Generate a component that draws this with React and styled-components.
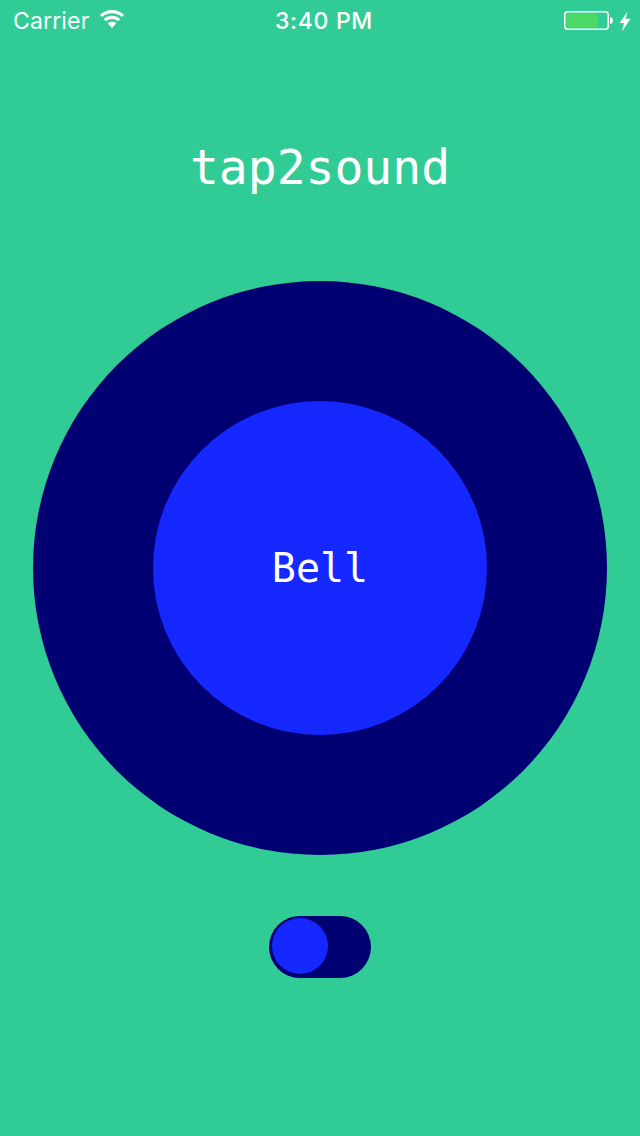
import React, { useState } from "react";
import styled, { createGlobalStyle } from "styled-components";

const GlobalStyle = createGlobalStyle`
  html, body {
    margin: 0;
    padding: 0;
    background-color: #31cc96;
  }
`;

const Screen = styled.div`
  width: 640px;
  height: 1136px;
  background-color: #31cc96;
  display: flex;
  flex-direction: column;
  align-items: center;
  overflow: hidden;
`;

const StatusBar = styled.div`
  width: 100%;
  height: 40px;
  box-sizing: border-box;
  padding: 2px 9px 0 13px;
  display: grid;
  grid-template-columns: 1fr auto 1fr;
  align-items: center;
  color: #fff;
  font-family: "Inter", "Liberation Sans", sans-serif;
  font-size: 23px;
`;

const StatusLeft = styled.div`
  display: flex;
  align-items: center;
  gap: 11px;
  letter-spacing: 0.15px;
`;

const WifiSlot = styled.span`
  display: flex;
  margin-bottom: 4px;
`;

const StatusRight = styled.div`
  display: flex;
  align-items: center;
  justify-content: flex-end;
  gap: 6px;
`;

const Clock = styled.div`
  margin-left: 4px;
  font-weight: 500;
  letter-spacing: 0.7px;
`;

const Title = styled.h1`
  margin: 95px 0 0;
  height: 64px;
  line-height: 64px;
  font-family: "DejaVu Sans Mono", monospace;
  font-size: 48px;
  font-weight: 400;
  color: #fff;
`;

const OuterCircle = styled.div`
  margin-top: 82px;
  width: 574px;
  height: 574px;
  border-radius: 50%;
  background-color: #000072;
  display: flex;
  align-items: center;
  justify-content: center;
`;

const InnerCircle = styled.div`
  width: 334px;
  height: 334px;
  border-radius: 50%;
  background-color: #1428ff;
  display: flex;
  align-items: center;
  justify-content: center;
  font-family: "DejaVu Sans Mono", monospace;
  font-size: 40px;
  color: #fff;
`;

const Track = styled.button`
  margin-top: 61px;
  width: 102px;
  height: 62px;
  padding: 2px 3px;
  border: none;
  border-radius: 31px;
  background-color: #000072;
  display: flex;
  justify-content: ${(p) => (p.$on ? "flex-end" : "flex-start")};
  cursor: pointer;
`;

const Knob = styled.span`
  width: 56px;
  height: 56px;
  border-radius: 50%;
  background-color: #1428ff;
`;

const Wifi = () => (
  <svg width="24" height="18" viewBox="0.8 1.2 24.4 18.3" fill="#fff">
    <path d="M13 19.5 L8.6 14.6 A6.4 6.4 0 0 1 17.4 14.6 Z" />
    <path d="M6.9 12.7 L4.7 10.3 A12 12 0 0 1 21.3 10.3 L19.1 12.7 A9 9 0 0 0 6.9 12.7 Z" />
    <path d="M3 8.4 L0.8 6 A18 18 0 0 1 25.2 6 L23 8.4 A15 15 0 0 0 3 8.4 Z" />
  </svg>
);

const Battery = () => (
  <svg width="49" height="20" viewBox="0 0 49 20">
    <rect x="0.75" y="0.75" width="43.5" height="17.5" rx="3" fill="none" stroke="#fff" strokeWidth="1.5" />
    <rect x="2.5" y="2.5" width="31" height="14" fill="#4cd964" />
    <path d="M46 6 C48 6.5 49 7.5 49 9.5 C49 11.5 48 12.5 46 13 Z" fill="#fff" />
  </svg>
);

const Bolt = () => (
  <svg width="12" height="21" viewBox="0 0 12 21" fill="#fff">
    <path d="M8.5 0.5 L0.5 12 L5 12 L3 20.5 L11.5 7.8 L6.6 7.8 Z" />
  </svg>
);

const App = () => {
  const [on, setOn] = useState(false);

  return (
    <>
      <GlobalStyle />
      <Screen>
        <StatusBar>
          <StatusLeft>
            Carrier
            <WifiSlot>
              <Wifi />
            </WifiSlot>
          </StatusLeft>
          <Clock>3:40 PM</Clock>
          <StatusRight>
            <Battery />
            <Bolt />
          </StatusRight>
        </StatusBar>
        <Title>tap2sound</Title>
        <OuterCircle>
          <InnerCircle>Bell</InnerCircle>
        </OuterCircle>
        <Track $on={on} onClick={() => setOn(!on)} aria-label="toggle">
          <Knob />
        </Track>
      </Screen>
    </>
  );
};

export default App;
